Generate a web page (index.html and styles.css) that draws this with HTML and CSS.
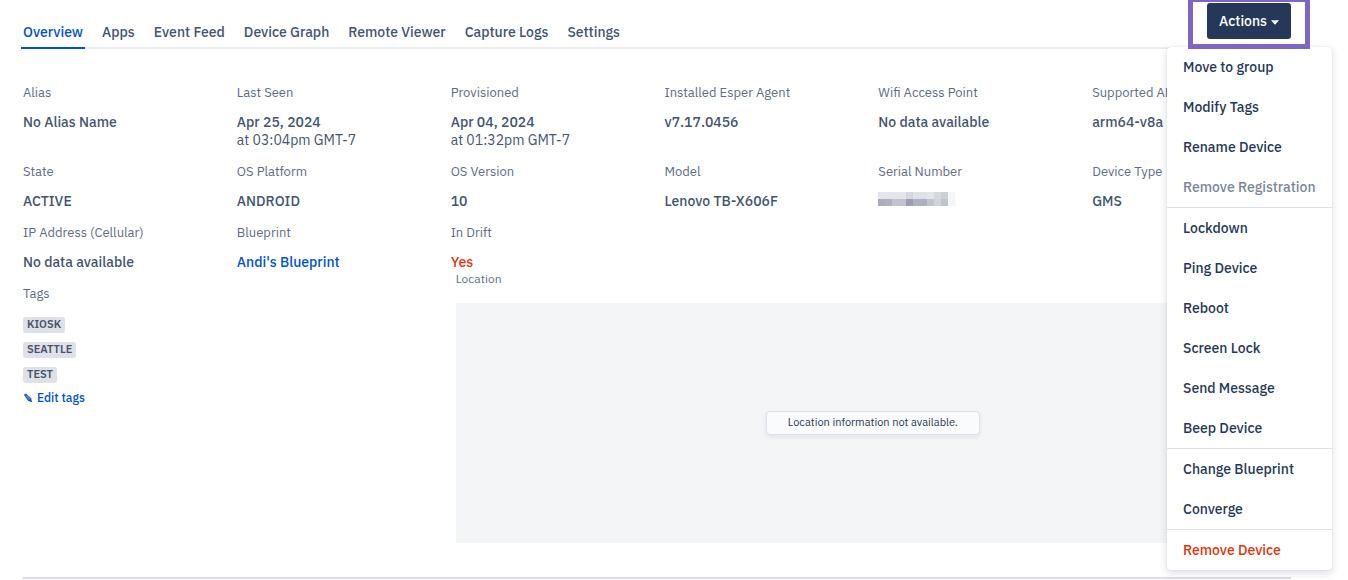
FILE: index.html
```html
<!DOCTYPE html>
<html lang="en">
<head>
    <meta charset="UTF-8">
    <meta name="viewport" content="width=device-width, initial-scale=1.0">
    <title>Device Overview</title>
    <link rel="stylesheet" href="styles.css">
</head>
<body>
    <header class="topbar">
        <nav class="tabs">
            <a href="#" class="tab active">Overview</a>
            <a href="#" class="tab">Apps</a>
            <a href="#" class="tab">Event Feed</a>
            <a href="#" class="tab">Device Graph</a>
            <a href="#" class="tab">Remote Viewer</a>
            <a href="#" class="tab">Capture Logs</a>
            <a href="#" class="tab">Settings</a>
        </nav>
        <div class="actions">
            <button type="button" class="actions-btn">
                Actions
                <svg class="caret" width="8" height="5" viewBox="0 0 8 5" aria-hidden="true"><path d="M0 0.3h8L4 4.8z" fill="currentColor"/></svg>
            </button>
            <div class="menu">
                <div class="menu-group">
                    <button type="button" class="menu-item">Move to group</button>
                    <button type="button" class="menu-item">Modify Tags</button>
                    <button type="button" class="menu-item">Rename Device</button>
                    <button type="button" class="menu-item" disabled>Remove Registration</button>
                </div>
                <div class="menu-group">
                    <button type="button" class="menu-item">Lockdown</button>
                    <button type="button" class="menu-item">Ping Device</button>
                    <button type="button" class="menu-item">Reboot</button>
                    <button type="button" class="menu-item">Screen Lock</button>
                    <button type="button" class="menu-item">Send Message</button>
                    <button type="button" class="menu-item">Beep Device</button>
                </div>
                <div class="menu-group">
                    <button type="button" class="menu-item">Change Blueprint</button>
                    <button type="button" class="menu-item">Converge</button>
                </div>
                <div class="menu-group">
                    <button type="button" class="menu-item danger">Remove Device</button>
                </div>
            </div>
            <div class="highlight"></div>
        </div>
    </header>

    <main class="overview">
        <dl class="fields">
            <div class="field">
                <dt>Alias</dt>
                <dd>No Alias Name</dd>
            </div>
            <div class="field">
                <dt>Last Seen</dt>
                <dd>Apr 25, 2024 <span class="time">at 03:04pm GMT-7</span></dd>
            </div>
            <div class="field">
                <dt>Provisioned</dt>
                <dd>Apr 04, 2024 <span class="time">at 01:32pm GMT-7</span></dd>
            </div>
            <div class="field">
                <dt>Installed Esper Agent</dt>
                <dd>v7.17.0456</dd>
            </div>
            <div class="field">
                <dt>Wifi Access Point</dt>
                <dd>No data available</dd>
            </div>
            <div class="field">
                <dt>Supported ABI</dt>
                <dd>arm64-v8a</dd>
            </div>
            <div class="field">
                <dt>State</dt>
                <dd>ACTIVE</dd>
            </div>
            <div class="field">
                <dt>OS Platform</dt>
                <dd>ANDROID</dd>
            </div>
            <div class="field">
                <dt>OS Version</dt>
                <dd>10</dd>
            </div>
            <div class="field">
                <dt>Model</dt>
                <dd>Lenovo TB-X606F</dd>
            </div>
            <div class="field">
                <dt>Serial Number</dt>
                <dd>
                    <svg class="redacted" width="77" height="14" viewBox="0 0 11 2" shape-rendering="crispEdges" aria-hidden="true">
                        <path fill="#e4e5ea" d="M0 0h4v1H0zM7 0h1v1H7z"/>
                        <path fill="#d6d8df" d="M4 0h1v1H4zM8 0h1v1H8z"/>
                        <path fill="#dee1e7" d="M5 0h2v1H5z"/>
                        <path fill="#cdcfd7" d="M9 0h1v1H9z"/>
                        <path fill="#f6f6f9" d="M10 0h1v2h-1z"/>
                        <path fill="#a7adba" d="M0 1h1v1H0z"/>
                        <path fill="#adb1be" d="M1 1h1v1H1zM5 1h2v1H5z"/>
                        <path fill="#c0c4ce" d="M2 1h2v1H2zM7 1h1v1H7zM9 1h1v1H9z"/>
                        <path fill="#989faf" d="M4 1h1v1H4z"/>
                        <path fill="#d0d3dc" d="M8 1h1v1H8z"/>
                    </svg>
                </dd>
            </div>
            <div class="field">
                <dt>Device Type</dt>
                <dd>GMS</dd>
            </div>
        </dl>

        <div class="lower">
            <dl class="fields-left">
                <div class="field">
                    <dt>IP Address (Cellular)</dt>
                    <dd>No data available</dd>
                </div>
                <div class="field">
                    <dt>Blueprint</dt>
                    <dd><a href="#">Andi's Blueprint</a></dd>
                </div>
                <div class="field">
                    <dt>Tags</dt>
                    <dd class="tags">
                        <span class="tag">KIOSK</span>
                        <span class="tag">SEATTLE</span>
                        <span class="tag">TEST</span>
                        <a href="#" class="edit-tags">
                            <svg width="10" height="10" viewBox="0 0 10 10" aria-hidden="true">
                                <path d="M.8 1.8 3 .5 8 5.2 9.2 9.3 5.2 7.9z" fill="currentColor"/>
                                <path d="M2.2 2.4 6.4 7M3.4 1.9l4 4.2" stroke="#fff" stroke-width=".4"/>
                            </svg>
                            Edit tags
                        </a>
                    </dd>
                </div>
            </dl>
            <div class="fields-right">
                <dl>
                    <dt>In Drift</dt>
                    <dd class="drift">Yes</dd>
                </dl>
                <section class="location">
                    <h2>Location</h2>
                    <div class="map">
                        <p class="map-message">Location information not available.</p>
                    </div>
                </section>
            </div>
        </div>
        <hr class="divider">
    </main>
</body>
</html>
```
FILE: styles.css
```css
* {
    margin: 0;
    padding: 0;
    box-sizing: border-box;
}

body {
    font-family: 'IBM Plex Sans', Roboto, sans-serif;
    font-size: 14px;
    line-height: 18px;
    color: #44546f;
    background: #fff;
    overflow: hidden;
}

a {
    color: #0052cc;
    text-decoration: none;
}

button {
    font: inherit;
    font-weight: 500;
    border: none;
    cursor: pointer;
}

/* top bar */
.topbar {
    display: flex;
    align-items: flex-start;
    margin: 0 57px 0 21px;
    padding-top: 3px;
}

.tabs {
    flex: 1;
    display: flex;
    gap: 15px;
    padding-top: 20px;
    border-bottom: 2px solid #ebecf0;
}

.tab {
    padding: 0 2px 6px;
    margin-bottom: -2px;
    border-bottom: 2px solid transparent;
    color: #44546f;
    font-weight: 500;
    white-space: nowrap;
}

.tab.active {
    color: #0052cc;
    border-bottom-color: #0052cc;
}

.actions {
    position: relative;
}

.actions-btn {
    display: flex;
    align-items: center;
    gap: 4px;
    height: 36px;
    padding: 0 12px;
    color: #fff;
    background: #253858;
    border-radius: 3px;
}

.caret {
    margin-top: 3px;
}

.highlight {
    position: absolute;
    inset: -6px -19px -10px -19px;
    border: 5px solid #7f66c6;
    pointer-events: none;
}

.menu {
    position: absolute;
    top: 44px;
    right: -41px;
    width: 165px;
    background: #fff;
    border-radius: 4px;
    box-shadow: 0 3px 8px rgba(9, 30, 66, 0.15), 0 0 1px rgba(9, 30, 66, 0.2);
}

.menu-group + .menu-group {
    border-top: 1px solid #dfe1e6;
}

.menu-item {
    display: block;
    width: 100%;
    height: 40px;
    padding: 0 16px;
    text-align: left;
    white-space: nowrap;
    color: #253858;
    background: none;
}

.menu-item:disabled {
    color: #7a869a;
    cursor: default;
}

.menu-item.danger {
    color: #de350b;
}

/* device details */
.overview {
    padding: 35px 42px 0 23px;
}

.fields {
    display: grid;
    grid-template-columns: repeat(6, 1fr);
}

.field {
    padding-bottom: 14px;
}

dt {
    margin-bottom: 11px;
    font-size: 13px;
    color: #5e6c84;
    white-space: nowrap;
}

dd {
    font-weight: 500;
}

.time {
    display: block;
    font-weight: 400;
}

.redacted {
    display: block;
}

.lower {
    display: grid;
    grid-template-columns: 1fr 2fr;
}

.fields-left {
    display: grid;
    grid-template-columns: 1fr 1fr;
    align-content: start;
}

.tags {
    display: flex;
    flex-direction: column;
    align-items: flex-start;
    gap: 9px;
    padding-top: 3px;
}

.tag {
    padding: 0 4px 2px;
    font-size: 11px;
    font-weight: 600;
    line-height: 14px;
    background: #dfe1e6;
    border-radius: 3px;
}

.edit-tags {
    display: flex;
    align-items: center;
    gap: 4px;
    margin-top: -3px;
    font-size: 12px;
}

.drift {
    color: #de350b;
}

.location {
    padding: 0 16px 0 5px;
}

.location h2 {
    margin-bottom: 16px;
    font-size: 12px;
    font-weight: 400;
    line-height: 16px;
    color: #5e6c84;
}

.map {
    display: flex;
    align-items: center;
    justify-content: center;
    height: 240px;
    background: #f4f5f7;
}

.map-message {
    padding: 1px 21px 3px;
    font-size: 11px;
    color: #253858;
    background: #fafbfc;
    border: 1px solid #dfe1e6;
    border-radius: 4px;
    box-shadow: 0 2px 4px rgba(38, 70, 150, 0.1);
}

.divider {
    height: 2px;
    margin: 34px 15px 0 0;
    border: none;
    background: #dcdde5;
}
```
